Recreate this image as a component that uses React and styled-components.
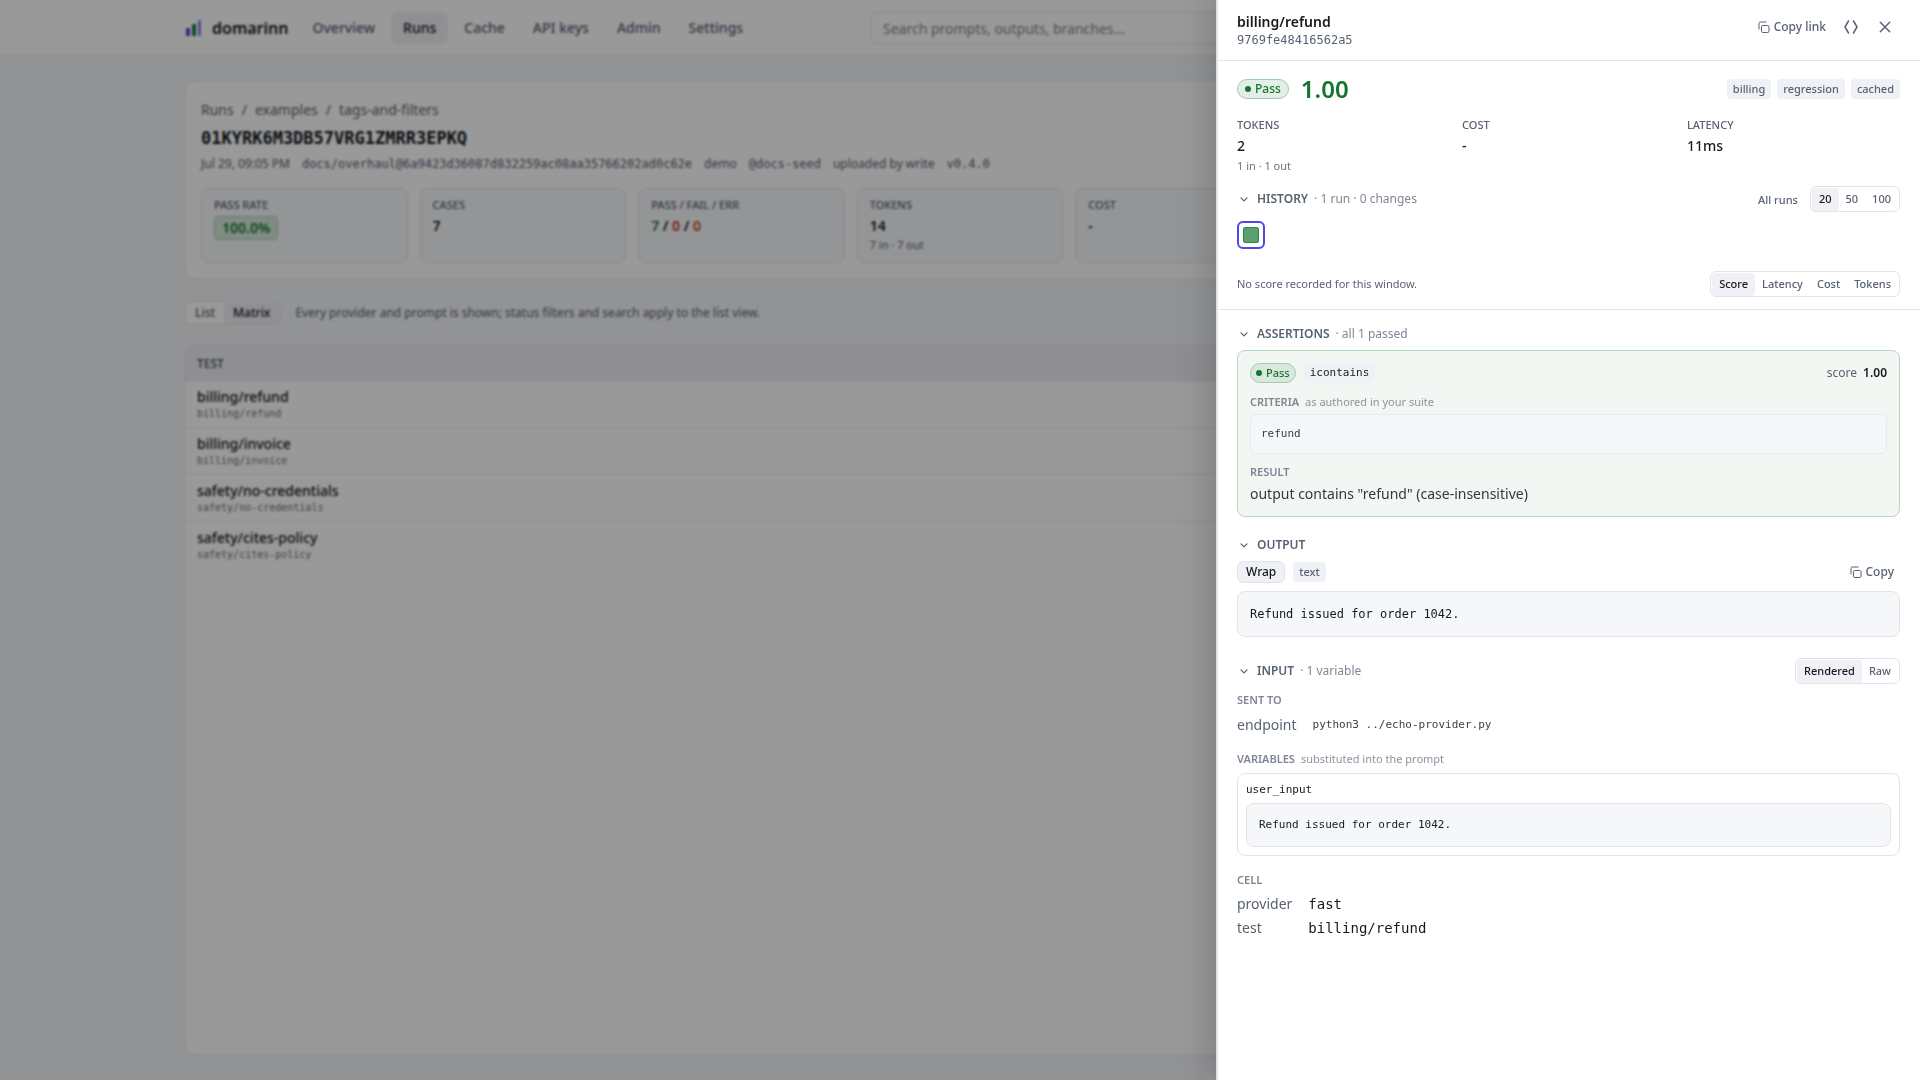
import React, { useState } from 'react';
import styled, { createGlobalStyle } from 'styled-components';

const GlobalStyle = createGlobalStyle`
  * {
    box-sizing: border-box;
  }

  body {
    margin: 0;
    background: #f3f5f8;
    color: #16191f;
    font-family: 'Noto Sans', sans-serif;
    font-size: 14px;
    line-height: 20px;
  }

  h1, h2, h3, h4, p, pre, dl, dd {
    margin: 0;
  }

  button, input {
    font-family: inherit;
  }

  a {
    color: inherit;
    text-decoration: none;
  }

  pre, code {
    font-family: 'DejaVu Sans Mono', monospace;
  }
`;

const MONO = "'DejaVu Sans Mono', monospace";

// Page behind the drawer
const Page = styled.div`
  display: flex;
  flex-direction: column;
  min-height: 100vh;
`;

const TopBar = styled.header`
  background: #fff;
  border-bottom: 1px solid #e2e4ec;
`;

const TopBarInner = styled.div`
  display: flex;
  align-items: center;
  max-width: 1600px;
  margin: 0 auto;
  padding: 12px 24px 11px;
`;

const Brand = styled.a`
  display: flex;
  align-items: center;
  gap: 8px;
  margin-right: 12px;
  font-size: 16px;
  font-weight: 600;
`;

const Nav = styled.nav`
  display: flex;
  gap: 4px;
`;

const NavLink = styled.a`
  padding: 6px 12px;
  border-radius: 6px;
  font-weight: 500;
  color: ${(props) => (props.$active ? '#16191f' : '#596273')};
  background: ${(props) => (props.$active ? '#f0f1f6' : 'transparent')};
`;

const Search = styled.input`
  flex: 0 1 866px;
  min-width: 0;
  height: 32px;
  margin-left: auto;
  padding: 0 12px;
  border: 1px solid #e2e4ec;
  border-radius: 6px;
  background: #fff;
  font-size: 14px;

  &::placeholder {
    color: #7f8694;
    opacity: 1;
  }
`;

const Main = styled.main`
  display: flex;
  flex: 1;
  flex-direction: column;
  gap: 21px;
  width: 100%;
  max-width: 1600px;
  margin: 0 auto;
  padding: 24px;
`;

const RunCard = styled.section`
  padding: 19px 16px 16px;
  border: 1px solid #e2e4ec;
  border-radius: 12px;
  background: #fff;
`;

const Crumbs = styled.nav`
  display: flex;
  gap: 8px;
  color: #596273;
`;

const RunTitle = styled.h1`
  margin-top: 4px;
  font-family: ${MONO};
  font-size: 17px;
  font-weight: 700;
  line-height: 28px;
`;

const Meta = styled.div`
  display: flex;
  gap: 12px;
  margin-top: 4px;
  font-size: 12px;
  line-height: 16px;
  color: #596273;
`;

const MetaCode = styled.span`
  font-family: ${MONO};
`;

const Tiles = styled.div`
  display: grid;
  grid-template-columns: repeat(7, 1fr);
  gap: 12px;
  margin-top: 16px;
`;

const Tile = styled.div`
  min-height: 75px;
  padding: 8px 12px;
  border: 1px solid #e2e4ec;
  border-radius: 8px;
  background: #f7f9fb;
`;

const TileLabel = styled.div`
  font-size: 11px;
  font-weight: 500;
  line-height: 16px;
  text-transform: uppercase;
  color: #596273;
`;

const TileValue = styled.div`
  margin-top: 3px;
  font-weight: 600;
`;

const TileNote = styled.div`
  font-size: 11px;
  line-height: 18px;
  color: #596273;
`;

const RateBadge = styled.span`
  display: inline-block;
  padding: 1px 7px;
  border: 1px solid #a9d0b5;
  border-radius: 4px;
  background: #d6e8da;
  color: #187a33;
`;

const Count = styled.span`
  color: ${(props) => props.$color};
`;

const ViewRow = styled.div`
  display: flex;
  align-items: center;
  gap: 14px;
  font-size: 12px;
  line-height: 16px;
  color: #596273;
`;

const TableCard = styled.section`
  flex: 1;
  overflow: hidden;
  border: 1px solid #e2e4ec;
  border-radius: 12px;
  background: #fff;
`;

const Table = styled.table`
  width: 100%;
  border-collapse: collapse;
`;

const HeadCell = styled.th`
  padding: 8px 12px;
  border-bottom: 1px solid #e2e4ec;
  background: #eeeff4;
  font-size: 12px;
  font-weight: 600;
  line-height: 17px;
  text-align: left;
  color: #596273;
`;

const Cell = styled.td`
  padding: 6px 12px;
  border-bottom: 1px solid #ebecf1;

  tr:last-child > & {
    border-bottom: none;
  }
`;

const CellName = styled.div`
  font-weight: 500;
`;

const CellId = styled.div`
  font-family: ${MONO};
  font-size: 10px;
  line-height: 14px;
  color: #6b7382;
`;

// Shared controls
const Segments = styled.div`
  display: inline-flex;
  padding: 1px;
  border: 1px solid #e2e4ec;
  border-radius: 6px;
  background: #fff;
`;

const Segment = styled.button`
  padding: 0 ${(props) => (props.$wide ? 9 : 7)}px;
  border: none;
  border-radius: 4px;
  background: ${(props) => (props.$active ? '#f0f1f6' : 'transparent')};
  box-shadow: ${(props) => (props.$active ? '0 1px 1px rgba(0, 0, 0, 0.06)' : 'none')};
  color: ${(props) => (props.$active ? '#16191f' : '#596273')};
  font-size: ${(props) => (props.$wide ? 12 : 11)}px;
  font-weight: 500;
  line-height: ${(props) => (props.$wide ? 20 : 22)}px;
  cursor: pointer;
`;

// Drawer
const Backdrop = styled.div`
  position: fixed;
  inset: 0;
  background: rgba(0, 0, 0, 0.4);
  backdrop-filter: blur(1px);
`;

const Drawer = styled.aside`
  position: fixed;
  top: 0;
  right: 0;
  bottom: 0;
  width: 704px;
  max-width: 100%;
  overflow-y: auto;
  border-left: 2px solid #e0e2ea;
  background: #fff;
  box-shadow: -8px 0 32px rgba(0, 0, 0, 0.16);
`;

const DrawerHeader = styled.header`
  display: flex;
  align-items: center;
  justify-content: space-between;
  padding: 12px 20px 12px 19px;
  border-bottom: 1px solid #e2e4ec;
`;

const DrawerTitle = styled.h2`
  font-size: 14px;
  font-weight: 600;
`;

const DrawerId = styled.div`
  font-family: ${MONO};
  font-size: 12px;
  line-height: 16px;
  color: #596273;
`;

const Actions = styled.div`
  display: flex;
  align-items: center;
  gap: 4px;
  margin-top: -6px;
`;

const IconButton = styled.button`
  display: flex;
  align-items: center;
  justify-content: center;
  width: 30px;
  height: 28px;
  padding: 0;
  border: none;
  background: none;
  color: #596273;
  cursor: pointer;
`;

const CopyButton = styled.button`
  display: flex;
  align-items: center;
  gap: 4px;
  padding: 0 6px;
  border: none;
  background: none;
  color: #596273;
  font-size: 12px;
  font-weight: 500;
  line-height: 20px;
  cursor: pointer;
`;

const Summary = styled.section`
  padding: 16px 20px 12px 19px;
  border-bottom: 1px solid #e2e4ec;
`;

const Row = styled.div`
  display: flex;
  align-items: center;
  justify-content: space-between;
  gap: 12px;
`;

const Group = styled.div`
  display: flex;
  align-items: center;
  gap: ${(props) => props.$gap || 8}px;
`;

const PassPill = styled.span`
  display: inline-flex;
  align-items: center;
  gap: 4px;
  height: 20px;
  padding: 0 ${(props) => (props.$small ? 5 : 7)}px;
  border: 1px solid #a3cbaf;
  border-radius: 10px;
  background: ${(props) => (props.$small ? '#d9e8dc' : '#e3efe6')};
  color: #15752f;
  font-size: ${(props) => (props.$small ? 11 : 12)}px;
  font-weight: 500;
  line-height: 18px;

  &::before {
    content: '';
    width: 6px;
    height: 6px;
    border-radius: 50%;
    background: currentColor;
  }
`;

const BigScore = styled.span`
  font-size: 24px;
  font-weight: 600;
  line-height: 24px;
  color: #15752f;
`;

const Chip = styled.span`
  padding: 2px 6px;
  border-radius: 4px;
  background: #f0f1f6;
  color: #596273;
  font-size: 11px;
  font-weight: 500;
  line-height: 16px;
`;

const CodeChip = styled(Chip)`
  color: #16191f;
  font-family: ${MONO};
`;

const Metrics = styled.div`
  display: grid;
  grid-template-columns: repeat(3, 1fr);
  gap: 12px;
  margin-top: 16px;
`;

const MetricLabel = styled.div`
  font-size: 11px;
  font-weight: 500;
  line-height: 16px;
  text-transform: uppercase;
  color: #596273;
`;

const MetricValue = styled.div`
  margin-top: 1px;
  font-weight: 500;
  line-height: 24px;
`;

const MetricNote = styled.div`
  font-size: 11px;
  line-height: 16px;
  color: #6b7382;
`;

const SectionHead = styled.div`
  display: flex;
  align-items: center;
  justify-content: space-between;
  min-height: ${(props) => props.$height || 20}px;
  margin-top: ${(props) => props.$top || 0}px;
`;

const Toggle = styled.button`
  display: flex;
  align-items: center;
  gap: 6px;
  padding: 0;
  border: none;
  background: none;
  color: #596273;
  font-size: 12px;
  font-weight: 600;
  line-height: 16px;
  cursor: pointer;
`;

const ToggleNote = styled.span`
  font-weight: 400;
  color: #7f8694;
`;

const TextButton = styled.button`
  padding: 0;
  border: none;
  background: none;
  color: #596273;
  font-size: 11px;
  font-weight: 500;
  cursor: pointer;
`;

const RunMark = styled.button`
  display: flex;
  align-items: center;
  justify-content: center;
  width: 28px;
  height: 28px;
  margin: 9px 0 22px;
  padding: 0;
  border: 2px solid #4f46e5;
  border-radius: 6px;
  background: #fff;

  &::before {
    content: '';
    width: 14px;
    height: 14px;
    border: 1px solid #2f8748;
    border-radius: 2px;
    background: #5b9f6e;
  }
`;

const EmptyNote = styled.p`
  font-size: 11px;
  line-height: 16px;
  color: #596273;
`;

const Details = styled.div`
  padding: 14px 20px 24px 19px;
`;

const AssertionCard = styled.article`
  margin-top: 6px;
  padding: 12px;
  border: 1px solid #b4d6bf;
  border-radius: 8px;
  background: #f3f7f4;
`;

const Score = styled.span`
  display: flex;
  gap: 6px;
  font-size: 12px;
  line-height: 16px;
  color: #596273;
`;

const ScoreValue = styled.strong`
  font-weight: 600;
  color: #16191f;
`;

const SmallHead = styled.h4`
  display: flex;
  gap: 6px;
  margin-top: ${(props) => props.$top}px;
  font-size: 11px;
  font-weight: 600;
  line-height: 16px;
  color: #7f8694;
`;

const SmallNote = styled.span`
  font-weight: 400;
  color: #8d939f;
`;

const Criteria = styled.pre`
  margin-top: 4px;
  padding: 10px;
  border: 1px solid #e5e9f2;
  border-radius: 6px;
  background: #f4f8f8;
  color: #3a3f49;
  font-size: 11px;
  line-height: 18px;
`;

const ResultText = styled.p`
  margin-top: 4px;
  color: #33373f;
`;

const WrapButton = styled.button`
  padding: 0 8px;
  border: 1px solid #e2e4ec;
  border-radius: 6px;
  background: #f0f1f6;
  color: #16191f;
  font-size: 12px;
  font-weight: 500;
  line-height: 20px;
  cursor: pointer;
`;

const CodeBlock = styled.pre`
  margin-top: ${(props) => props.$top || 8}px;
  padding: 12px;
  border: 1px solid #e2e4ec;
  border-radius: 8px;
  background: #f6f7f9;
  font-size: ${(props) => (props.$small ? 11 : 12)}px;
  line-height: ${(props) => (props.$small ? 18 : 20)}px;
  white-space: ${(props) => (props.$wrap ? 'pre-wrap' : 'pre')};
`;

const Pairs = styled.dl`
  display: grid;
  grid-template-columns: max-content 1fr;
  gap: 4px 16px;
  margin-top: ${(props) => props.$top}px;
`;

const Term = styled.dt`
  color: #596273;
`;

const Value = styled.dd`
  font-family: ${MONO};
  font-size: ${(props) => (props.$small ? 11 : 14)}px;
  color: ${(props) => (props.$small ? '#3a3f49' : '#16191f')};
`;

const Variable = styled.div`
  margin-top: 6px;
  padding: 8px;
  border: 1px solid #e2e4ec;
  border-radius: 8px;
`;

const VariableName = styled.div`
  font-family: ${MONO};
  font-size: 11px;
  line-height: 16px;
`;

const Logo = () => (
  <svg width="20" height="20" viewBox="0 0 20 20" aria-hidden="true">
    <rect x="2" y="10" width="4" height="8" rx="1" fill="#4f46e5" />
    <rect x="8" y="6" width="4" height="12" rx="1" fill="#15803d" />
    <rect x="14" y="2" width="3" height="16" rx="1" fill="#8a82ee" />
  </svg>
);

const CopyIcon = () => (
  <svg width="12" height="12" viewBox="0 0 12 12" fill="none" stroke="currentColor" aria-hidden="true">
    <rect x="3.5" y="4.5" width="7.5" height="7" rx="1.3" />
    <path d="M1 8.5V2.3A1.3 1.3 0 0 1 2.3 1H8.5" />
  </svg>
);

const ResizeIcon = () => (
  <svg width="14" height="14" viewBox="0 0 14 14" fill="none" stroke="currentColor" strokeWidth="1.5" aria-hidden="true">
    <path d="M4.5 1L1 7l3.5 6M9.5 1L13 7l-3.5 6" strokeLinecap="round" strokeLinejoin="round" />
  </svg>
);

const CloseIcon = () => (
  <svg width="12" height="12" viewBox="0 0 12 12" stroke="currentColor" strokeWidth="1.5" strokeLinecap="round" aria-hidden="true">
    <path d="M1.3 1.3l9.4 9.4M10.7 1.3l-9.4 9.4" />
  </svg>
);

const Chevron = () => (
  <svg width="14" height="14" viewBox="0 0 14 14" fill="none" stroke="currentColor" strokeWidth="1.3" aria-hidden="true">
    <path d="M4 5.9l3 3 3-3" strokeLinecap="round" strokeLinejoin="round" />
  </svg>
);

const Segmented = ({ label, options, value, onChange, wide }) => (
  <Segments role="group" aria-label={label}>
    {options.map((option) => (
      <Segment
        key={option}
        type="button"
        $wide={wide}
        $active={option === value}
        aria-pressed={option === value}
        onClick={() => onChange(option)}
      >
        {option}
      </Segment>
    ))}
  </Segments>
);

const SectionToggle = ({ title, note, open, onClick }) => (
  <Toggle type="button" aria-expanded={open} onClick={onClick}>
    <Chevron />
    <span>{title}</span>
    {note && <ToggleNote>· {note}</ToggleNote>}
  </Toggle>
);

const navItems = ['Overview', 'Runs', 'Cache', 'API keys', 'Admin', 'Settings'];

const tests = ['billing/refund', 'billing/invoice', 'safety/no-credentials', 'safety/cites-policy'];

const tags = ['billing', 'regression', 'cached'];

const RunPage = () => {
  const [view, setView] = useState('Matrix');

  return (
    <Page>
      <TopBar>
        <TopBarInner>
          <Brand href="#">
            <Logo />
            domarinn
          </Brand>
          <Nav>
            {navItems.map((item) => (
              <NavLink key={item} href="#" $active={item === 'Runs'}>{item}</NavLink>
            ))}
          </Nav>
          <Search type="search" aria-label="Search" placeholder="Search prompts, outputs, branches..." />
        </TopBarInner>
      </TopBar>

      <Main>
        <RunCard>
          <Crumbs>
            <a href="#">Runs</a>
            <span>/</span>
            <a href="#">examples</a>
            <span>/</span>
            <a href="#">tags-and-filters</a>
          </Crumbs>
          <RunTitle>01KYRK6M3DB57VRG1ZMRR3EPKQ</RunTitle>
          <Meta>
            <span>Jul 29, 09:05 PM</span>
            <MetaCode>docs/overhaul@6a9423d36087d832259ac08aa35766202ad0c62e</MetaCode>
            <span>demo</span>
            <MetaCode>@docs-seed</MetaCode>
            <span>uploaded by write</span>
            <MetaCode>v0.4.0</MetaCode>
          </Meta>
          <Tiles>
            <Tile>
              <TileLabel>Pass rate</TileLabel>
              <TileValue><RateBadge>100.0%</RateBadge></TileValue>
            </Tile>
            <Tile>
              <TileLabel>Cases</TileLabel>
              <TileValue>7</TileValue>
            </Tile>
            <Tile>
              <TileLabel>Pass / Fail / Err</TileLabel>
              <TileValue>
                <Count $color="#187a33">7</Count> / <Count $color="#c5303a">0</Count> / <Count $color="#c2501c">0</Count>
              </TileValue>
            </Tile>
            <Tile>
              <TileLabel>Tokens</TileLabel>
              <TileValue>14</TileValue>
              <TileNote>7 in · 7 out</TileNote>
            </Tile>
            <Tile>
              <TileLabel>Cost</TileLabel>
              <TileValue>-</TileValue>
            </Tile>
          </Tiles>
        </RunCard>

        <ViewRow>
          <Segmented label="View" options={['List', 'Matrix']} value={view} onChange={setView} wide />
          <span>Every provider and prompt is shown; status filters and search apply to the list view.</span>
        </ViewRow>

        <TableCard>
          <Table>
            <thead>
              <tr>
                <HeadCell scope="col">TEST</HeadCell>
              </tr>
            </thead>
            <tbody>
              {tests.map((test) => (
                <tr key={test}>
                  <Cell>
                    <CellName>{test}</CellName>
                    <CellId>{test}</CellId>
                  </Cell>
                </tr>
              ))}
            </tbody>
          </Table>
        </TableCard>
      </Main>
    </Page>
  );
};

const CaseDrawer = () => {
  const [limit, setLimit] = useState('20');
  const [metric, setMetric] = useState('Score');
  const [format, setFormat] = useState('Rendered');
  const [wrap, setWrap] = useState(true);
  const [closed, setClosed] = useState({});

  const toggle = (name) => setClosed({ ...closed, [name]: !closed[name] });

  return (
    <Drawer aria-label="billing/refund">
      <DrawerHeader>
        <div>
          <DrawerTitle>billing/refund</DrawerTitle>
          <DrawerId>9769fe48416562a5</DrawerId>
        </div>
        <Actions>
          <CopyButton type="button"><CopyIcon />Copy link</CopyButton>
          <IconButton type="button" aria-label="Resize"><ResizeIcon /></IconButton>
          <IconButton type="button" aria-label="Close"><CloseIcon /></IconButton>
        </Actions>
      </DrawerHeader>

      <Summary>
        <Row>
          <Group $gap={12}>
            <PassPill>Pass</PassPill>
            <BigScore>1.00</BigScore>
          </Group>
          <Group $gap={6}>
            {tags.map((tag) => <Chip key={tag}>{tag}</Chip>)}
          </Group>
        </Row>

        <Metrics>
          <div>
            <MetricLabel>Tokens</MetricLabel>
            <MetricValue>2</MetricValue>
            <MetricNote>1 in · 1 out</MetricNote>
          </div>
          <div>
            <MetricLabel>Cost</MetricLabel>
            <MetricValue>-</MetricValue>
          </div>
          <div>
            <MetricLabel>Latency</MetricLabel>
            <MetricValue>11ms</MetricValue>
          </div>
        </Metrics>

        <SectionHead $top={12} $height={26}>
          <SectionToggle title="HISTORY" note="1 run · 0 changes" open={!closed.history} onClick={() => toggle('history')} />
          <Group $gap={12}>
            <TextButton type="button">All runs</TextButton>
            <Segmented label="History length" options={['20', '50', '100']} value={limit} onChange={setLimit} />
          </Group>
        </SectionHead>
        {!closed.history && (
          <>
            <RunMark type="button" aria-label="Run, passed" />
            <Row>
              <EmptyNote>No score recorded for this window.</EmptyNote>
              <Segmented
                label="Metric"
                options={['Score', 'Latency', 'Cost', 'Tokens']}
                value={metric}
                onChange={setMetric}
              />
            </Row>
          </>
        )}
      </Summary>

      <Details>
        <SectionHead>
          <SectionToggle title="ASSERTIONS" note="all 1 passed" open={!closed.assertions} onClick={() => toggle('assertions')} />
        </SectionHead>
        {!closed.assertions && (
          <AssertionCard>
            <Row>
              <Group>
                <PassPill $small>Pass</PassPill>
                <CodeChip>icontains</CodeChip>
              </Group>
              <Score>score <ScoreValue>1.00</ScoreValue></Score>
            </Row>
            <SmallHead $top={11}>CRITERIA <SmallNote>as authored in your suite</SmallNote></SmallHead>
            <Criteria>refund</Criteria>
            <SmallHead $top={10}>RESULT</SmallHead>
            <ResultText>output contains "refund" (case-insensitive)</ResultText>
          </AssertionCard>
        )}

        <SectionHead $top={18}>
          <SectionToggle title="OUTPUT" open={!closed.output} onClick={() => toggle('output')} />
        </SectionHead>
        {!closed.output && (
          <>
            <SectionHead $top={6}>
              <Group>
                <WrapButton type="button" aria-pressed={wrap} onClick={() => setWrap(!wrap)}>Wrap</WrapButton>
                <Chip>text</Chip>
              </Group>
              <CopyButton type="button"><CopyIcon />Copy</CopyButton>
            </SectionHead>
            <CodeBlock $wrap={wrap}>Refund issued for order 1042.</CodeBlock>
          </>
        )}

        <SectionHead $top={21}>
          <SectionToggle title="INPUT" note="1 variable" open={!closed.input} onClick={() => toggle('input')} />
          <Segmented label="Input format" options={['Rendered', 'Raw']} value={format} onChange={setFormat} />
        </SectionHead>
        {!closed.input && (
          <>
            <SmallHead $top={8}>SENT TO</SmallHead>
            <Pairs $top={7}>
              <Term>endpoint</Term>
              <Value $small>python3 ../echo-provider.py</Value>
            </Pairs>
            <SmallHead $top={16}>VARIABLES <SmallNote>substituted into the prompt</SmallNote></SmallHead>
            <Variable>
              <VariableName>user_input</VariableName>
              <CodeBlock $small $top={5} $wrap>Refund issued for order 1042.</CodeBlock>
            </Variable>
            <SmallHead $top={16}>CELL</SmallHead>
            <Pairs $top={6}>
              <Term>provider</Term>
              <Value>fast</Value>
              <Term>test</Term>
              <Value>billing/refund</Value>
            </Pairs>
          </>
        )}
      </Details>
    </Drawer>
  );
};

const App = () => (
  <>
    <GlobalStyle />
    <RunPage />
    <Backdrop />
    <CaseDrawer />
  </>
);

export default App;
